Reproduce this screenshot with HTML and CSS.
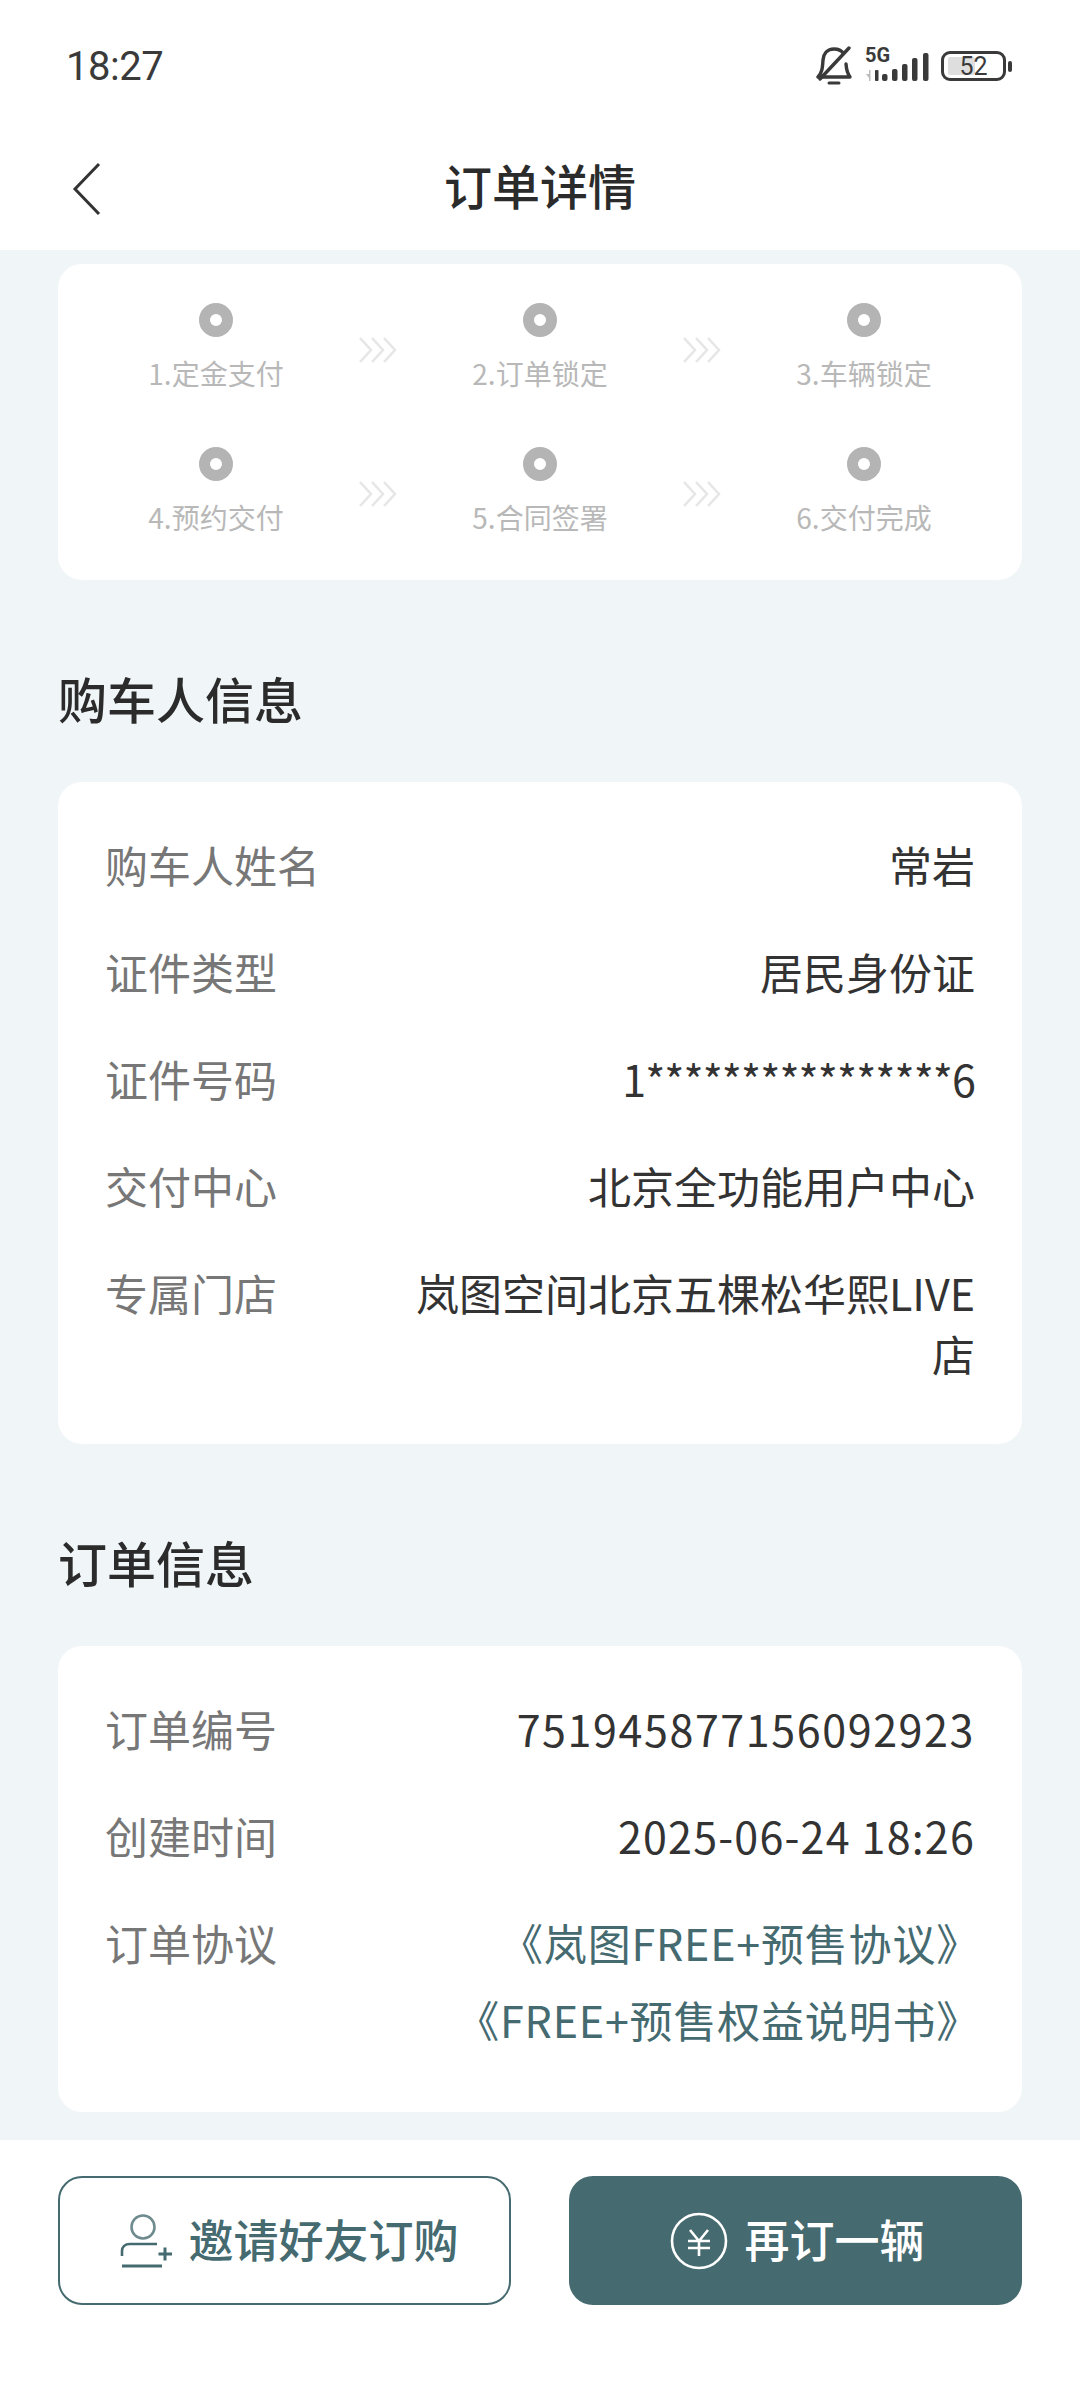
FILE: index.html
```html
<!DOCTYPE html>
<html lang="zh-CN">
<head>
  <meta charset="UTF-8">
  <meta name="viewport" content="width=device-width, initial-scale=1.0">
  <title>订单详情</title>
  <link rel="stylesheet" href="styles.css">
</head>
<body>
  <div class="top">
    <div class="status-bar">
      <span class="time">18:27</span>
      <div class="status-icons">
        <svg class="bell" width="36" height="40" viewBox="0 0 36 40" fill="none" stroke="#3a3a3a" stroke-width="3.400" stroke-linecap="round" stroke-linejoin="round">
          <path d="M2 31H34C31 27 30.500 24 30 18M27.500 7.500C25.500 4.500 22.500 3 18 3C11 3 7.500 8 7 14C6.500 22 6 27 2 31"/>
          <path d="M33 2L4 33"/>
          <path d="M13 37H23" stroke-width="3"/>
        </svg>
        <div class="signal">
          <span class="net">5G</span>
          <svg class="bars" width="64" height="30" viewBox="0 0 64 30" fill="#3a3a3a">
            <path d="M0 21h3v-4h1.500v11h-1.500v-3z" fill="#bdbdbd"/>
            <rect x="9" y="17" width="3.500" height="11" rx="1"/>
            <rect x="16" y="21" width="5.500" height="7" rx="2"/>
            <rect x="26" y="16" width="5.500" height="12" rx="2"/>
            <rect x="36" y="11" width="5.500" height="17" rx="2"/>
            <rect x="46" y="5" width="5.500" height="23" rx="2"/>
            <rect x="57" y="0" width="5.500" height="28" rx="2"/>
          </svg>
        </div>
        <div class="battery">
          <div class="battery-body">
            <div class="battery-level"></div>
            <span class="battery-num">52</span>
          </div>
          <div class="battery-cap"></div>
        </div>
      </div>
    </div>
    <div class="nav">
      <svg class="back" width="30" height="54" viewBox="0 0 30 54" fill="none" stroke="#333" stroke-width="3">
        <path d="M27 2L3 27L27 52"/>
      </svg>
      <h1>订单详情</h1>
    </div>
  </div>

  <main class="content">
    <section class="card steps">
      <div class="step-row">
        <div class="step"><span class="dot"></span><span>1.定金支付</span></div>
        <div class="arrow"><svg width="38" height="26" viewBox="0 0 38 26"><path d="M1 1L12 13L1 25M13 1L24 13L13 25M25 1L36 13L25 25"/></svg></div>
        <div class="step"><span class="dot"></span><span>2.订单锁定</span></div>
        <div class="arrow"><svg width="38" height="26" viewBox="0 0 38 26"><path d="M1 1L12 13L1 25M13 1L24 13L13 25M25 1L36 13L25 25"/></svg></div>
        <div class="step"><span class="dot"></span><span>3.车辆锁定</span></div>
      </div>
      <div class="step-row">
        <div class="step"><span class="dot"></span><span>4.预约交付</span></div>
        <div class="arrow"><svg width="38" height="26" viewBox="0 0 38 26"><path d="M1 1L12 13L1 25M13 1L24 13L13 25M25 1L36 13L25 25"/></svg></div>
        <div class="step"><span class="dot"></span><span>5.合同签署</span></div>
        <div class="arrow"><svg width="38" height="26" viewBox="0 0 38 26"><path d="M1 1L12 13L1 25M13 1L24 13L13 25M25 1L36 13L25 25"/></svg></div>
        <div class="step"><span class="dot"></span><span>6.交付完成</span></div>
      </div>
    </section>

    <h2>购车人信息</h2>
    <section class="card info">
      <div class="row"><span class="label">购车人姓名</span><span class="value">常岩</span></div>
      <div class="row"><span class="label">证件类型</span><span class="value">居民身份证</span></div>
      <div class="row"><span class="label">证件号码</span><span class="value masked">1****************6</span></div>
      <div class="row"><span class="label">交付中心</span><span class="value">北京全功能用户中心</span></div>
      <div class="row"><span class="label">专属门店</span><span class="value">岚图空间北京五棵松华熙LIVE店</span></div>
    </section>

    <h2>订单信息</h2>
    <section class="card info info-order">
      <div class="row"><span class="label">订单编号</span><span class="value num">751945877156092923</span></div>
      <div class="row"><span class="label">创建时间</span><span class="value date">2025-06-24 18:26</span></div>
      <div class="row">
        <span class="label">订单协议</span>
        <span class="value links"><span>《岚图FREE+预售协议》</span><span>《FREE+预售权益说明书》</span></span>
      </div>
    </section>
  </main>

  <div class="bottom-bar">
    <button class="btn btn-outline">
      <svg width="52" height="54" viewBox="0 0 52 54" fill="none" stroke="#456a6f" stroke-width="2.600">
        <circle cx="23" cy="13" r="11.500" stroke="#6f8b8f"/>
        <path d="M2 42V37C2 33 5 30 10 30H37"/>
        <path d="M2 52H42" stroke-width="3"/>
        <path d="M38.500 40H52M45 33.500V46.500" stroke-width="3"/>
      </svg>
      <span>邀请好友订购</span>
    </button>
    <button class="btn btn-solid">
      <svg width="58" height="58" viewBox="0 0 58 58" fill="none" stroke="#fff" stroke-width="2.600">
        <circle cx="29" cy="29" r="27"/>
        <path d="M20 18L29 29L38 18M18 29H40M18 36H40M29 29V44"/>
      </svg>
      <span>再订一辆</span>
    </button>
  </div>
</body>
</html>
```

FILE: styles.css
```css
* {
  box-sizing: border-box;
}
html, body {
  margin: 0;
  padding: 0;
}
body {
  width: 1080px;
  height: 2400px;
  display: flex;
  flex-direction: column;
  overflow: hidden;
  font-family: "Noto Sans CJK SC", "Noto Sans", sans-serif;
  background-color: #f0f5f7;
  color: #333333;
}

/* Status bar + title */
.top {
  background-color: #ffffff;
  height: 250px;
  flex-shrink: 0;
}
.status-bar {
  height: 130px;
  padding: 2px 68px 0 66px;
  display: flex;
  align-items: center;
  justify-content: space-between;
}
.time {
  font-family: Roboto, sans-serif;
  font-size: 40px;
  letter-spacing: -0.5px;
  color: #3a3a3a;
}
.status-icons {
  display: flex;
  align-items: center;
  gap: 14px;
}
.signal {
  position: relative;
  width: 64px;
  height: 34px;
  margin-right: -3px;
}
.net {
  position: absolute;
  left: -1px;
  top: -6px;
  font-family: Roboto, sans-serif;
  font-size: 20px;
  font-weight: 700;
  color: #3a3a3a;
}
.bars {
  position: absolute;
  left: 0;
  bottom: 0;
}
.battery {
  display: flex;
  align-items: center;
  gap: 2px;
}
.battery-body {
  position: relative;
  width: 65px;
  height: 30px;
  border: 3px solid #3a3a3a;
  border-radius: 9px;
  display: flex;
  align-items: center;
  justify-content: center;
}
.battery-level {
  position: absolute;
  left: 4px;
  top: 3px;
  bottom: 3px;
  width: 27px;
  background-color: #dedede;
  border-radius: 2px;
}
.battery-num {
  position: relative;
  font-family: Roboto, sans-serif;
  font-size: 25px;
  color: #3a3a3a;
}
.battery-cap {
  width: 4px;
  height: 11px;
  background-color: #3a3a3a;
  border-radius: 2px;
}
.nav {
  position: relative;
  height: 120px;
  padding-bottom: 12px;
  display: flex;
  align-items: center;
  justify-content: center;
}
.nav h1 {
  margin: 0;
  font-size: 48px;
  font-weight: 500;
  color: #2b2b2b;
}
.back {
  position: absolute;
  left: 72px;
  top: 32px;
}

/* Cards */
.content {
  flex: 1;
  padding: 14px 58px 0;
  overflow: hidden;
}
.card {
  background-color: #ffffff;
  border-radius: 24px;
}
h2 {
  margin: 0;
  height: 202px;
  padding-top: 83px;
  line-height: 70px;
  font-size: 49px;
  font-weight: 500;
  color: #2b2b2b;
}

/* Step progress */
.steps {
  height: 316px;
  padding: 39px 42px 0;
  display: flex;
  flex-direction: column;
  gap: 24px;
}
.step-row {
  display: flex;
  align-items: flex-start;
  height: 120px;
}
.step {
  width: 232px;
  display: flex;
  flex-direction: column;
  align-items: center;
  gap: 16px;
  font-size: 28px;
  line-height: 40px;
  color: #b8b8b8;
}
.dot {
  width: 34px;
  height: 34px;
  border-radius: 50%;
  border: 11px solid #b4b4b4;
  background-color: #ffffff;
}
.arrow {
  width: 92px;
  padding-top: 34px;
  display: flex;
  justify-content: center;
}
.arrow path {
  fill: none;
  stroke: #e6e6e6;
  stroke-width: 2.500;
}

/* Info rows */
.info {
  padding: 52px 47px 60px;
  display: flex;
  flex-direction: column;
  gap: 46px;
}
.info-order {
  height: 466px;
}
.row {
  display: flex;
  justify-content: space-between;
  gap: 40px;
  font-size: 43px;
  line-height: 61px;
}
.label {
  flex-shrink: 0;
  color: #777777;
}
.value {
  text-align: right;
  color: #333333;
  max-width: 580px;
}
.num {
  letter-spacing: 1.600px;
}
.date {
  letter-spacing: 1.200px;
}
.masked {
  letter-spacing: -0.900px;
}
.links {
  display: flex;
  flex-direction: column;
  align-items: flex-end;
  gap: 16px;
  margin-right: -5px;
  letter-spacing: 0.800px;
  color: #456a6f;
}

/* Bottom buttons */
.bottom-bar {
  flex-shrink: 0;
  height: 260px;
  padding: 36px 58px 0;
  background-color: #ffffff;
  display: flex;
  justify-content: space-between;
}
.btn {
  width: 453px;
  height: 129px;
  border-radius: 24px;
  font-family: inherit;
  font-size: 45px;
  font-weight: 500;
  display: flex;
  align-items: center;
  justify-content: center;
  gap: 16px;
}
.btn span {
  margin-top: -4px;
}
.btn-outline {
  padding-left: 16px;
  background-color: #ffffff;
  color: #456a6f;
  border: 2px solid #456a6f;
}
.btn-solid {
  padding-left: 10px;
  background-color: #456a6f;
  color: #ffffff;
  border: none;
}
```
